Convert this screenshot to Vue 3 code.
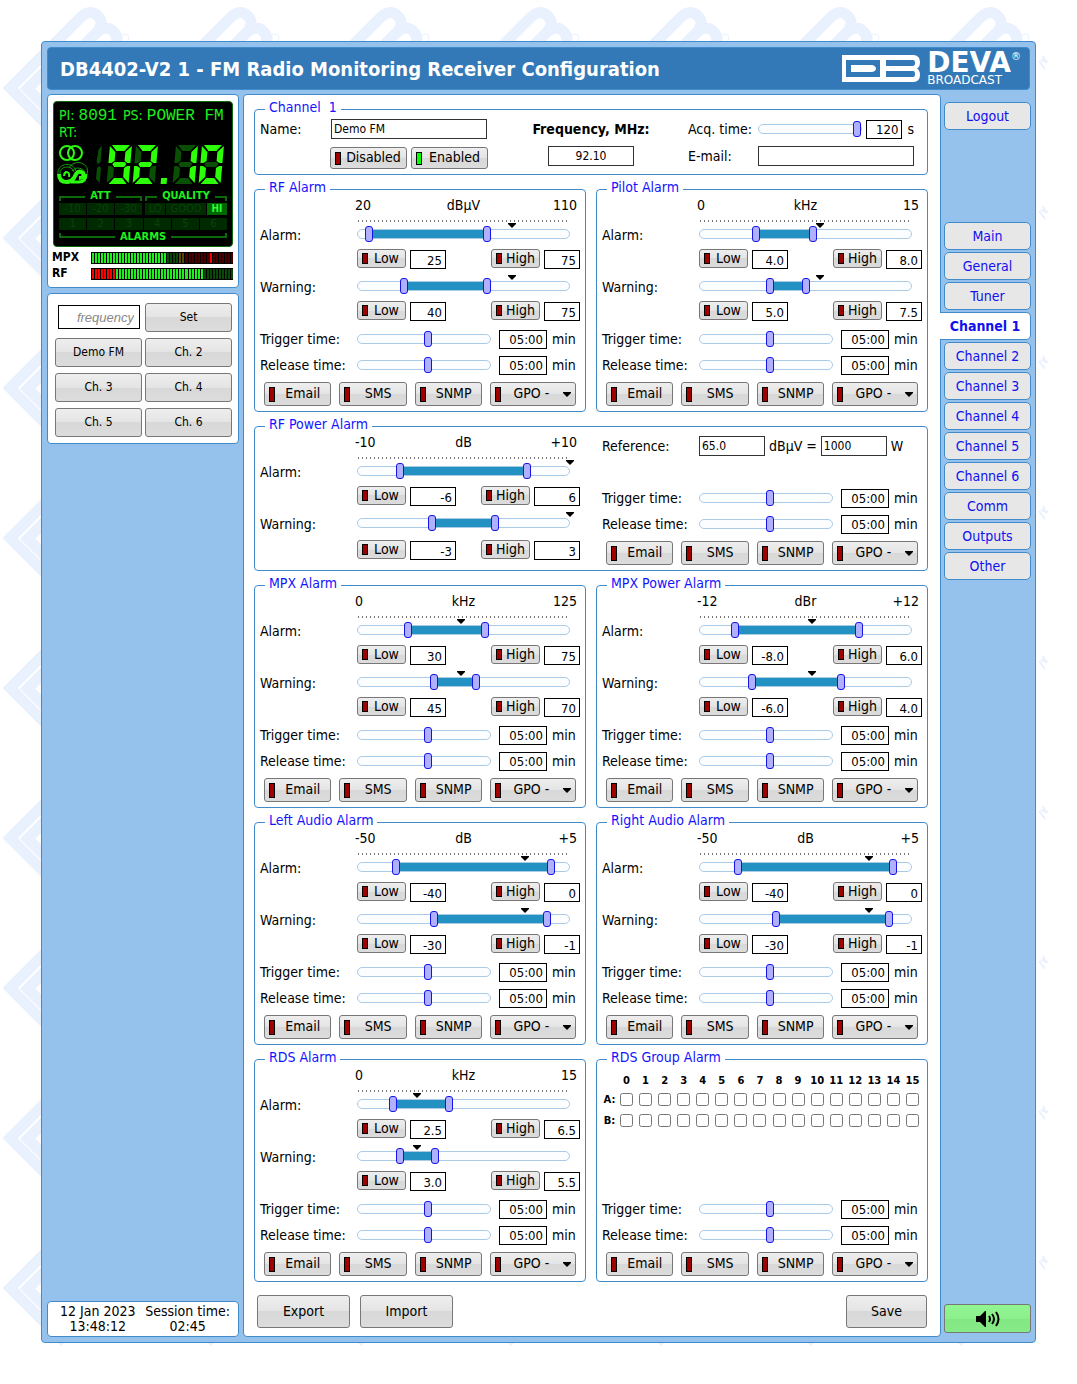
<script setup>
import { reactive, ref } from 'vue'

const menu = ['Main', 'General', 'Tuner', 'Channel 1', 'Channel 2', 'Channel 3', 'Channel 4', 'Channel 5', 'Channel 6', 'Comm', 'Outputs', 'Other']
const presets = ['Demo FM', 'Ch. 2', 'Ch. 3', 'Ch. 4', 'Ch. 5', 'Ch. 6']
const notify = ['Email', 'SMS', 'SNMP']
const groupNumbers = Array.from({ length: 16 }, (_, i) => i)

const panels = reactive([
  { id: 'rf', title: 'RF Alarm', unit: 'dBµV', min: 20, max: 110, from: '20', to: '110', level: 73, rows: [['Alarm', '25', '75'], ['Warning', '40', '75']] },
  { id: 'pilot', title: 'Pilot Alarm', unit: 'kHz', min: 0, max: 15, from: '0', to: '15', level: 57, rows: [['Alarm', '4.0', '8.0'], ['Warning', '5.0', '7.5']] },
  { id: 'power', title: 'RF Power Alarm', unit: 'dB', min: -10, max: 10, from: '-10', to: '+10', level: 100, wide: true, rows: [['Alarm', '-6', '6'], ['Warning', '-3', '3']] },
  { id: 'mpx', title: 'MPX Alarm', unit: 'kHz', min: 0, max: 125, from: '0', to: '125', level: 49, rows: [['Alarm', '30', '75'], ['Warning', '45', '70']] },
  { id: 'mpxpower', title: 'MPX Power Alarm', unit: 'dBr', min: -12, max: 12, from: '-12', to: '+12', level: 53, rows: [['Alarm', '-8.0', '6.0'], ['Warning', '-6.0', '4.0']] },
  { id: 'left', title: 'Left Audio Alarm', unit: 'dB', min: -50, max: 5, from: '-50', to: '+5', level: 79, rows: [['Alarm', '-40', '0'], ['Warning', '-30', '-1']] },
  { id: 'right', title: 'Right Audio Alarm', unit: 'dB', min: -50, max: 5, from: '-50', to: '+5', level: 80, rows: [['Alarm', '-40', '0'], ['Warning', '-30', '-1']] },
  { id: 'rds', title: 'RDS Alarm', unit: 'kHz', min: 0, max: 15, from: '0', to: '15', level: 28, rows: [['Alarm', '2.5', '6.5'], ['Warning', '3.0', '5.5']] },
  { id: 'group', title: 'RDS Group Alarm', groups: true, rows: [] },
])
const times = ['Trigger time', 'Release time']
const channel = reactive({ name: 'Demo FM', freq: '92.10', acq: '120', email: '', ref: '65.0', watts: '1000' })
const tune = ref('')

const share = (p, v) => ((Number(v) - p.min) / (p.max - p.min)) * 100

// Seven-segment shapes on a 22 x 39 cell, in the order a b c d e f g
const segments = [
  '2,0 20,0 15,6 7,6',
  '22,1 22,18 19,18 16,16 16,7',
  '22,21 22,38 16,32 16,23 19,21',
  '7,33 15,33 20,39 2,39',
  '0,21 3,21 6,23 6,32 0,38',
  '0,1 6,7 6,16 3,18 0,18',
  '6,17 16,17 18,19 16,22 6,22 4,19',
]
const digits = [
  { x: 14, on: 'abcdfg' },
  { x: 40, on: 'abged' },
  { x: 80, on: 'bc' },
  { x: 106, on: 'abcdef' },
]

const mpxBars = Array.from({ length: 47 }, (_, i) =>
  i < 25 ? 'go' : i < 29 ? 'gx' : i < 31 ? 'yx' : i === 39 ? 'ro' : 'rx')
const rfBars = Array.from({ length: 47 }, (_, i) => (i < 8 ? 'ro' : i < 37 ? 'go' : 'gx'))
</script>

<template>
  <div class="page">
    <svg class="wallpaper" width="1050" height="1350" aria-hidden="true">
      <defs>
        <pattern id="marks" width="150" height="150" patternUnits="userSpaceOnUse">
          <g transform="translate(3 88) rotate(-45)" fill="none" stroke="#e9f1fe" stroke-width="11">
            <path d="M58 18H17V38H58M5 0V54M0 5H106Q118 6 118 16T106 27Q118 28 118 38T106 50H0M66 27H106M66 5V50" />
          </g>
          <circle cx="125" cy="38" r="4" fill="none" stroke="#e9f1fe" />
          <path d="M139 61l6 8M143 56l3 7M141 60l7 2" stroke="#e9f1fe" stroke-width="2" />
          <path d="M56 141l5 5 5-5z" fill="#e9f1fe" />
        </pattern>
      </defs>
      <rect width="100%" height="100%" fill="url(#marks)" />
    </svg>

    <div class="shell">
      <header class="banner">
        <h1>DB4402-V2 1 - FM Radio Monitoring Receiver Configuration</h1>
        <div class="brand">
          <svg width="78" height="27" viewBox="0 0 78 27" aria-hidden="true">
            <path fill="#fff" fill-rule="evenodd" d="M0 0H72Q78 1 78 7 78 12 75 13.500 78 15 78 20 78 26 72 27H0ZM4 5V22H38V5ZM44 5V11H71Q73 11 73 8T71 5ZM44 16V22H71Q73 22 73 19T71 16Z" />
            <path fill="#fff" d="M9 10H30Q34 11 34 13.500T30 17H9Z" />
          </svg>
          <div class="brand-text"><strong>DEVA</strong><sup>®</sup><span>BROADCAST</span></div>
        </div>
      </header>

      <div class="columns">
        <aside class="side">
          <section class="card monitor">
            <div class="lcd">
              <div class="lcd-line"><span>PI:</span><code>8091</code><span class="ps">PS:</span><code>POWER FM</code></div>
              <div class="lcd-line">RT:</div>
              <div class="lcd-main">
                <svg class="lcd-icons" width="32" height="42" viewBox="0 0 32 42" fill="none" aria-hidden="true">
                  <g stroke="#2dfa10" stroke-width="2">
                    <circle cx="10" cy="9" r="7" />
                    <circle cx="18" cy="9" r="7" />
                  </g>
                  <g stroke="#129a0a">
                    <path d="M1 30A9 8 0 0 1 19 27M12 24A9 8 0 0 1 30 30" />
                    <path d="M3 30A7 6 0 0 1 17 28M15 27A7 6 0 0 1 28 30" />
                  </g>
                  <path d="M2 30Q2 38 10 38 14 38 17 34L19 30Q22 26 26 29 28 34 22 34" stroke="#2dfa10" stroke-width="4" />
                  <path d="M14 38H22Q29 38 29 30" stroke="#2dfa10" stroke-width="3" />
                  <path d="M12 33Q13 28 9 28 7 29 7 32" stroke="#2dfa10" stroke-width="2" />
                </svg>
                <svg width="134" height="42" viewBox="0 0 134 42" role="img" aria-label="92.10 MHz">
                  <g transform="translate(4 1) skewX(-5)">
                    <g fill="#094f04">
                      <polygon points="3,4 6,1 6,17 4,19 2,17" />
                      <polygon points="3,23 5,21 7,23 7,38 3,34" />
                    </g>
                    <g v-for="d in digits" :key="d.x" :transform="`translate(${d.x} 0)`">
                      <polygon v-for="(s, i) in segments" :key="i" :points="s" :fill="d.on.includes('abcdefg'[i]) ? '#2dff08' : '#094f04'" />
                    </g>
                    <rect x="68" y="33" width="6" height="6" fill="#2dff08" />
                  </g>
                </svg>
              </div>
              <div class="brackets top">
                <div class="bracket att"><span>ATT</span></div>
                <div class="bracket quality"><span>QUALITY</span></div>
              </div>
              <div class="brackets">
                <div class="cells att"><i>-10</i><i>-20</i><i>-30</i></div>
                <div class="cells quality"><i class="lo">LO</i><i class="good">GOOD</i><i class="hi">HI</i></div>
              </div>
              <div class="cells alarms"><i v-for="n in 6" :key="n">{{ n }}</i></div>
              <div class="bracket under"><span>ALARMS</span></div>
            </div>
            <div class="meter"><b>MPX</b><div class="bars"><i v-for="(c, i) in mpxBars" :key="i" :class="c"></i></div></div>
            <div class="meter"><b>RF</b><div class="bars"><i v-for="(c, i) in rfBars" :key="i" :class="c"></i></div></div>
          </section>

          <section class="card tuning">
            <input v-model="tune" class="tune" type="text" placeholder="frequency" aria-label="Frequency">
            <button type="button">Set</button>
            <button v-for="p in presets" :key="p" type="button">{{ p }}</button>
          </section>

          <section class="card clock">
            <div>12 Jan 2023<br>13:48:12</div>
            <div>Session time:<br>02:45</div>
          </section>
        </aside>

        <main class="content">
          <form class="grid" @submit.prevent>
            <fieldset class="wide channel">
              <legend>Channel &nbsp;1</legend>
              <div class="channel-grid">
                <label class="c-label" for="ch-name">Name:</label>
                <div class="c-name">
                  <input id="ch-name" v-model="channel.name" class="field" type="text">
                  <div class="switch">
                    <button type="button" class="led-btn"><i class="led"></i><span>Disabled</span></button>
                    <button type="button" class="led-btn"><i class="led on"></i><span>Enabled</span></button>
                  </div>
                </div>
                <div class="c-freq">
                  <label for="ch-freq">Frequency, MHz:</label>
                  <input id="ch-freq" v-model="channel.freq" class="field" type="text">
                </div>
                <div class="c-right">
                  <div class="c-row">
                    <label for="ch-acq">Acq. time:</label>
                    <div class="slider"><input type="range" min="0" max="126" :value="channel.acq" aria-label="Acquisition time"></div>
                    <input id="ch-acq" v-model="channel.acq" class="num" type="text"><span class="unit">s</span>
                  </div>
                  <div class="c-row">
                    <label for="ch-mail">E-mail:</label>
                    <input id="ch-mail" v-model="channel.email" class="field mail" type="email">
                  </div>
                </div>
              </div>
            </fieldset>

            <fieldset v-for="p in panels" :key="p.id" :class="{ wide: p.wide }">
              <legend>{{ p.title }}</legend>
              <div class="panel" :class="{ split: p.wide }">
                <div v-if="p.groups" class="levels">
                  <table class="groups">
                    <thead>
                      <tr><td></td><th v-for="n in groupNumbers" :key="n" scope="col">{{ n }}</th></tr>
                    </thead>
                    <tbody>
                      <tr v-for="g in ['A', 'B']" :key="g">
                        <th scope="row">{{ g }}:</th>
                        <td v-for="n in groupNumbers" :key="n"><input type="checkbox" :aria-label="`Group ${n}${g}`"></td>
                      </tr>
                    </tbody>
                  </table>
                </div>
                <div v-else class="levels">
                  <div class="scale"><span>{{ p.from }}</span><span>{{ p.unit }}</span><span>{{ p.to }}</span></div>
                  <div v-for="(r, ri) in p.rows" :key="r[0]" class="range">
                    <span class="label">{{ r[0] }}:</span>
                    <div class="range-body">
                      <div class="track-zone">
                        <div class="ticks" :class="{ blank: ri }"></div>
                        <svg class="marker" :style="{ left: p.level + '%' }" width="8" height="5" viewBox="0 0 8 5" aria-hidden="true"><path d="M0 0H8V1L4 5 0 1Z" /></svg>
                        <div class="slider dual">
                          <div class="fill" :style="{ left: share(p, r[1]) + '%', right: 100 - share(p, r[2]) + '%' }"></div>
                          <input v-model="r[1]" type="range" :min="p.min" :max="p.max" step="0.5" :aria-label="`${p.title} ${r[0]} low`">
                          <input v-model="r[2]" type="range" :min="p.min" :max="p.max" step="0.5" :aria-label="`${p.title} ${r[0]} high`">
                        </div>
                      </div>
                      <div class="limits">
                        <div class="limit">
                          <button type="button" class="led-btn small"><i class="led"></i><span>Low</span></button>
                          <input :value="r[1]" class="num" type="text" :aria-label="`${p.title} ${r[0]} low value`">
                        </div>
                        <div class="limit">
                          <button type="button" class="led-btn small"><i class="led"></i><span>High</span></button>
                          <input :value="r[2]" class="num" type="text" :aria-label="`${p.title} ${r[0]} high value`">
                        </div>
                      </div>
                    </div>
                  </div>
                </div>

                <div class="timing">
                  <div v-if="p.wide" class="reference">
                    <label for="ref-level">Reference:</label>
                    <input id="ref-level" v-model="channel.ref" class="field" type="text">
                    <label for="ref-watts">dBµV =</label>
                    <input id="ref-watts" v-model="channel.watts" class="field" type="text">
                    <span>W</span>
                  </div>
                  <div v-for="t in times" :key="t" class="time">
                    <label class="label" :for="p.id + t[0]">{{ t }}:</label>
                    <div class="slider"><input type="range" min="0" max="100" value="53" :aria-label="`${p.title} ${t}`"></div>
                    <input :id="p.id + t[0]" class="num clock-num" type="text" value="05:00"><span class="unit">min</span>
                  </div>
                  <div class="actions">
                    <button v-for="n in notify" :key="n" type="button" class="led-btn"><i class="led"></i><span>{{ n }}</span></button>
                    <div class="gpo">
                      <i class="led"></i>
                      <select :aria-label="`${p.title} GPO`"><option>GPO -</option><option v-for="n in 6" :key="n">GPO {{ n }}</option></select>
                      <svg width="8" height="5" viewBox="0 0 8 5" aria-hidden="true"><path d="M0 0H8V1L4 5 0 1Z" /></svg>
                    </div>
                  </div>
                </div>
              </div>
            </fieldset>
          </form>
          <div class="footer">
            <button type="button">Export</button>
            <button type="button">Import</button>
            <button type="button" class="save">Save</button>
          </div>
        </main>

        <nav class="menu">
          <a href="#logout" class="logout">Logout</a>
          <a v-for="m in menu" :key="m" href="#" :class="{ active: m === 'Channel 1' }">{{ m }}</a>
          <button type="button" class="sound" aria-label="Sound">
            <svg width="24" height="18" viewBox="0 0 24 18" fill="none" aria-hidden="true">
              <path d="M0 6H4L9 1H10V17H9L4 12H0Z" fill="#000" />
              <path d="M13 6Q15 9 13 12M16 4Q20 9 16 14M20 2Q25 9 20 16" stroke="#000" stroke-width="2" />
            </svg>
          </button>
        </nav>
      </div>
    </div>
  </div>
</template>

<style>
body {
  background: #fff;
}
</style>

<style scoped>
.page {
  position: relative;
  box-sizing: border-box;
  padding: 41px;
  font: 14px/16px "DejaVu Sans Condensed", "DejaVu Sans", sans-serif;
  color: #000;
}
.page *,
.page *::before,
.page *::after {
  box-sizing: border-box;
}
.wallpaper {
  position: absolute;
  top: 0;
  left: 0;
}
.shell {
  position: relative;
  padding: 5px;
  background: #95c2ec;
  border: 1px solid #428bca;
  border-radius: 4px;
}
button,
input,
select {
  margin: 0;
  font-family: inherit;
  color: #000;
}
button,
.gpo {
  padding: 0;
  border: 1px solid #777;
  border-radius: 3px;
  background: linear-gradient(#eee, #e4e4e4 50%, #d8d8d8 50%, #dcdcdc);
}

/* Banner */
.banner {
  display: flex;
  justify-content: space-between;
  align-items: center;
  height: 43px;
  padding: 0 8px 0 12px;
  background: #3379b7;
  border: 1px solid #428bca;
  border-radius: 4px;
  color: #fff;
}
h1 {
  margin: 0;
  font-size: 20px;
  line-height: 24px;
}
.brand {
  display: flex;
  align-items: center;
  gap: 7px;
}
.brand-text {
  display: grid;
  grid-template-columns: auto 1fr;
  font-family: "DejaVu Sans", sans-serif;
}
.brand-text strong {
  font-size: 28px;
  line-height: 22px;
}
.brand-text sup {
  font-size: 10px;
  line-height: 10px;
}
.brand-text span {
  grid-column: 1 / 3;
  font-size: 12px;
  line-height: 12px;
}

.columns {
  display: flex;
  margin-top: 4px;
}
.side {
  display: flex;
  flex-direction: column;
  flex: 0 0 192px;
  gap: 5px;
  margin-right: 4px;
}
.card {
  background: #fff;
  border: 1px solid #428bca;
  border-radius: 4px;
}

/* Receiver display */
.monitor {
  padding: 6px 5px;
}
.lcd {
  height: 146px;
  padding: 5px 5px 0;
  background: #000;
  border: 1px solid #0a6a0a;
  border-radius: 4px;
  color: #1df01d;
}
.lcd-line {
  display: flex;
  height: 17px;
  line-height: 17px;
}
.lcd-line code {
  margin-left: 4px;
  font: 16px/18px "Liberation Mono", monospace;
}
.lcd-line .ps {
  margin-left: 6px;
}
.lcd-main {
  display: flex;
  gap: 3px;
  height: 48px;
  padding-top: 3px;
}
.lcd-icons {
  margin-left: -2px;
}
.brackets {
  display: flex;
  gap: 3px;
}
.att {
  flex: 0 0 83px;
}
.quality {
  flex: 1;
}
.bracket {
  display: flex;
  align-items: center;
  gap: 5px;
  height: 14px;
  font-size: 11px;
  font-weight: bold;
  line-height: 14px;
}
.bracket::before,
.bracket::after {
  content: "";
  flex: 1;
  height: 5px;
  margin-top: 4px;
  border: 0 solid #0a6a0a;
  border-top-width: 2px;
}
.bracket::before {
  border-left-width: 2px;
}
.bracket::after {
  border-right-width: 2px;
}
.under::before,
.under::after {
  margin: 0 0 3px;
  border-width: 0 0 2px;
}
.under::before {
  border-left-width: 2px;
}
.under::after {
  border-right-width: 2px;
}
.cells {
  display: flex;
  gap: 1px;
  height: 15px;
}
.cells i {
  flex: 1;
  height: 12px;
  background: #002b00;
  color: #0a420a;
  font-size: 11px;
  font-style: normal;
  line-height: 12px;
  text-align: center;
}
.cells .lo {
  flex: 20;
}
.cells .good {
  flex: 39;
}
.cells .hi {
  flex: 20;
  background: #006600;
  color: #2dff2d;
  font-size: 10px;
  font-weight: bold;
}
.cells.alarms {
  height: 12px;
}
.meter {
  display: flex;
  height: 16px;
  margin-left: -1px;
  font-size: 12px;
  line-height: 16px;
}
.monitor .lcd + .meter {
  margin-top: 2px;
}
.meter b {
  flex: 0 0 39px;
}
.bars {
  display: flex;
  flex: 1;
  gap: 1px;
  height: 12px;
  margin-top: 3px;
  padding: 1px 0 1px 1px;
  background: #000;
}
.bars i {
  flex: 1;
}
.go {
  background: #20f020;
}
.gx {
  background: #084808;
}
.yx {
  background: #554a00;
}
.ro {
  background: #f00;
}
.rx {
  background: #480000;
}

/* Tuning */
.tuning {
  display: grid;
  grid-template-columns: 1fr 1fr;
  gap: 6px 3px;
  padding: 9px 6px 6px 7px;
}
.tuning button {
  height: 29px;
  font-size: 12px;
  line-height: 14px;
  padding-bottom: 2px;
}
.tune {
  width: 82px;
  height: 24px;
  margin: 2px 0 0 3px;
  padding: 0 5px;
  border: 1px solid #000;
  text-align: right;
  font: italic 13px "Liberation Sans", sans-serif;
}
.tune::placeholder {
  color: #888;
}
.clock {
  display: flex;
  justify-content: space-between;
  height: 36px;
  margin-top: auto;
  padding: 2px 8px 0 12px;
  line-height: 15px;
  text-align: center;
}

/* Settings */
.content {
  flex: 1;
  min-width: 0;
  padding: 6px 12px 8px 10px;
  background: #fff;
  border: 1px solid #428bca;
  border-radius: 4px;
}
.grid {
  display: grid;
  grid-template-columns: minmax(0, 1fr) minmax(0, 1fr);
  gap: 6px 10px;
}
.wide {
  grid-column: 1 / 3;
}
fieldset {
  min-width: 0;
  margin: 0;
  padding: 0 5px 5px;
  border: 1px solid #428bca;
  border-radius: 4px;
}
legend {
  height: 16px;
  margin-left: 5px;
  padding: 0 4px;
  line-height: 13px;
  color: #1414ff;
}
.field {
  height: 20px;
  padding: 0 2px;
  border: 1px solid #333;
  background: #fff;
  font-size: 12px;
}
.num {
  width: 36px;
  height: 19px;
  padding: 1px 3px 0 0;
  border: 1px solid #000;
  background: #fff;
  font-size: 13px;
  text-align: right;
}
.led-btn {
  display: flex;
  align-items: center;
  padding-left: 4px;
  font-size: 14px;
}
.led-btn span {
  flex: 1;
  text-align: center;
  line-height: 20px;
  padding-bottom: 2px;
}
.led {
  flex: 0 0 6px;
  height: 15px;
  background: #a00000;
  border: 1px solid #000;
}
.led.on {
  background: #0f0;
}

/* Sliders */
.slider {
  display: flex;
  flex: 1;
  align-items: center;
  min-width: 0;
  height: 10px;
  border: 1px solid #a9cbe8;
  border-radius: 5px;
  background: #fbfdff;
}
.slider input {
  flex: 1;
  min-width: 0;
  height: 16px;
  margin: 0 -5px;
  appearance: none;
  background: none;
}
.slider input::-webkit-slider-thumb {
  appearance: none;
  width: 8px;
  height: 16px;
  border: 1px solid #1414e6;
  border-radius: 3px;
  background: #b0b0ff;
}
.dual {
  position: relative;
}
.dual input {
  position: absolute;
  left: 0;
  width: calc(100% + 10px);
  pointer-events: none;
}
.dual input::-webkit-slider-thumb {
  pointer-events: auto;
}
.fill {
  position: absolute;
  top: 0;
  height: 8px;
  background: #2391c2;
}

.channel-grid {
  display: flex;
  min-height: 52px;
  padding-top: 2px;
}
.c-label {
  flex: 0 0 70px;
  line-height: 20px;
}
.c-name {
  flex: 0 0 158px;
}
.c-name .field {
  width: 156px;
  margin-left: 1px;
  display: block;
}
.switch {
  display: flex;
  gap: 4px;
  margin-top: 8px;
}
.switch .led-btn {
  flex: 1;
  height: 22px;
}
.switch .led {
  height: 13px;
}
.c-freq {
  display: flex;
  flex: 1;
  flex-direction: column;
  align-items: center;
  gap: 7px;
  padding-left: 6px;
  font-weight: bold;
}
.c-freq label {
  line-height: 20px;
}
.c-freq .field {
  width: 86px;
  text-align: center;
}
.c-right {
  display: flex;
  flex: 0 0 226px;
  flex-direction: column;
  gap: 7px;
  min-width: 0;
  margin-right: 8px;
}
.c-row {
  display: flex;
  align-items: center;
  height: 20px;
}
.c-row label {
  flex: 0 0 70px;
}
.c-row .num {
  margin-left: 4px;
}
.mail {
  flex: 1;
  min-width: 0;
}
.unit {
  margin-left: 5px;
}

/* Alarm panels */
.levels {
  min-height: 124px;
}
.scale {
  display: grid;
  grid-template-columns: 1fr auto 1fr;
  height: 20px;
  padding: 0 8px 0 95px;
}
.scale span:last-child {
  margin-right: -5px;
  text-align: right;
}
.range {
  display: flex;
  height: 52px;
}
.label {
  flex: 0 0 97px;
}
.range .label {
  padding-top: 10px;
}
.range-body {
  flex: 1;
  min-width: 0;
}
.track-zone {
  position: relative;
  height: 32px;
  margin-right: 10px;
  padding-top: 3px;
}
.ticks {
  height: 9px;
  background: repeating-linear-gradient(90deg, transparent 0 1px, #777 1px 2px, transparent 2px 4px) 0 0 / 100% 2px no-repeat;
}
.ticks.blank {
  visibility: hidden;
}
.marker {
  position: absolute;
  top: 6px;
  margin-left: -4px;
}
.limits {
  display: flex;
  justify-content: space-between;
}
.limit {
  display: flex;
  gap: 4px;
}
.limit .num {
  margin-top: 1px;
}
.small {
  width: 49px;
  height: 19px;
}
.small .led {
  height: 11px;
}
.small span {
  line-height: 16px;
  padding-bottom: 1px;
}
.timing {
  padding-top: 5px;
}
.time {
  display: flex;
  align-items: center;
  height: 26px;
}
.time .clock-num {
  width: 48px;
  margin-left: 8px;
}
.time .unit {
  flex: 0 0 28px;
}
.actions {
  display: grid;
  grid-template-columns: repeat(3, minmax(0, 67fr)) minmax(0, 85fr);
  gap: 8px;
  margin: 4px 4px 0;
}
.actions .led-btn {
  height: 24px;
}
.gpo {
  display: flex;
  align-items: center;
  height: 24px;
  padding: 0 4px;
}
.gpo select {
  flex: 1;
  min-width: 0;
  height: 22px;
  padding: 0 0 2px 12px;
  appearance: none;
  border: 0;
  background: none;
  font-size: 14px;
}
.split {
  display: grid;
  grid-template-columns: minmax(0, 1fr) minmax(0, 1fr);
  gap: 22px;
}
.split .num {
  width: 46px;
}
.split .time .num {
  width: 48px;
}
.split .range:last-child {
  height: 54px;
}
.split .range:last-child .limits {
  padding-top: 2px;
}
.split .timing {
  padding-top: 2px;
}
.reference {
  display: flex;
  align-items: center;
  gap: 4px;
  height: 20px;
  margin-bottom: 29px;
}
.reference label:first-child {
  flex: 0 0 93px;
}
.reference .field {
  width: 66px;
}

.groups {
  width: 100%;
  table-layout: fixed;
  border-collapse: collapse;
  font: 10px/12px "DejaVu Sans", sans-serif;
}
.groups th,
.groups td {
  height: 21px;
  padding: 0;
  text-align: center;
  vertical-align: middle;
}
.groups thead td {
  width: 15px;
}
.groups thead th {
  height: 22px;
  padding-bottom: 2px;
  vertical-align: bottom;
}
.groups input {
  display: block;
  width: 13px;
  height: 13px;
  margin: 0 auto;
}
.footer {
  display: flex;
  gap: 10px;
  padding: 13px 1px 0 3px;
}
.footer button {
  width: 93px;
  height: 33px;
  font-size: 14px;
  padding-bottom: 2px;
}
.footer .save {
  width: 81px;
  margin-left: auto;
}

/* Section menu */
.menu {
  display: flex;
  flex-direction: column;
  flex: 0 0 90px;
  gap: 2px;
  margin-right: -1px;
  padding: 8px 0 4px 3px;
}
.menu a {
  height: 28px;
  border: 1px solid #428bca;
  border-radius: 5px;
  background: #e7e7e7;
  color: #1010f0;
  line-height: 26px;
  text-align: center;
  text-decoration: none;
}
.menu .logout {
  margin-bottom: 90px;
}
.menu .active {
  position: relative;
  margin-left: -4px;
  border-left: 0;
  border-radius: 0 5px 5px 0;
  background: #fff;
  font-weight: bold;
}
.menu .sound {
  display: flex;
  align-items: center;
  justify-content: center;
  height: 29px;
  margin-top: auto;
  background: linear-gradient(#90f690, #8cf08c 50%, #82e882 50%, #86ea86);
}
</style>
